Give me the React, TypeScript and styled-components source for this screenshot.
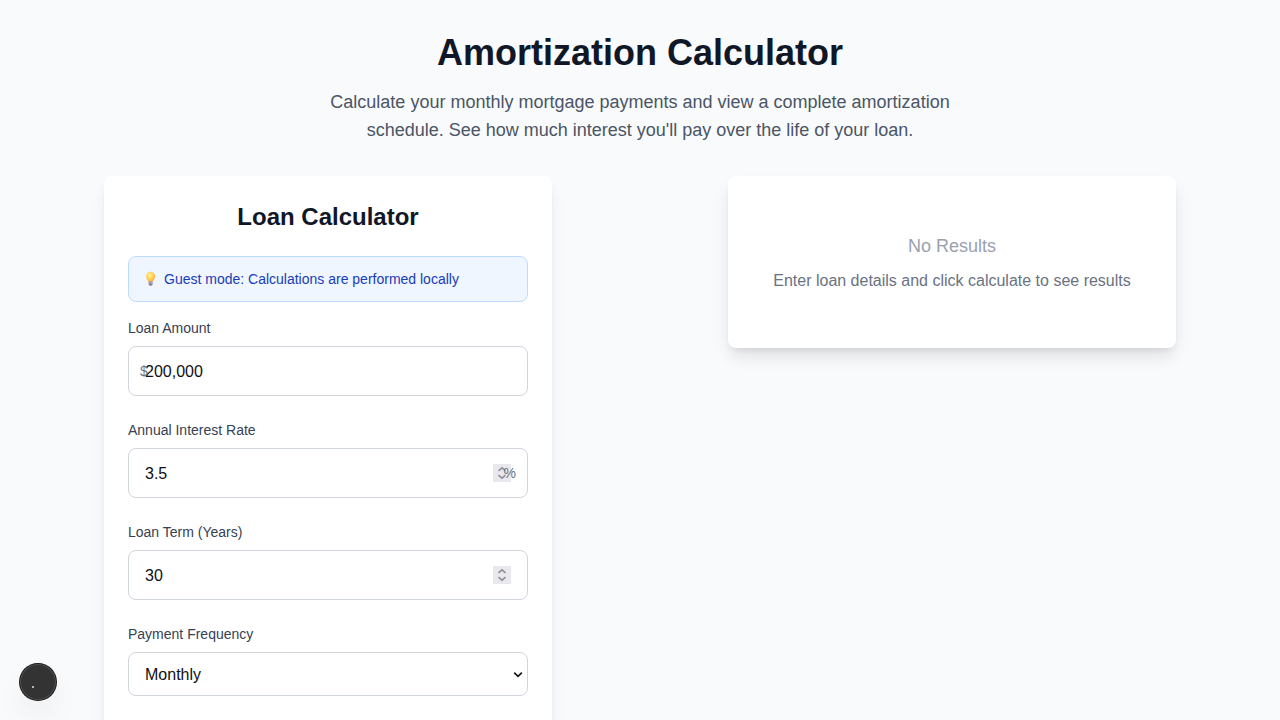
import React from "react";
import styled, { createGlobalStyle } from "styled-components";

const Global = createGlobalStyle`
  *, *::before, *::after { box-sizing: border-box; }
  html, body { margin: 0; padding: 0; }
  body {
    height: 720px;
    overflow: hidden;
    background: #f9fafb;
    color: #101828;
    font-family: "Liberation Sans", Arial, sans-serif;
    font-size: 16px;
    line-height: 24px;
  }
  h1, h2, p { margin: 0; }
`;

const Page = styled.main`
  height: 720px;
  overflow: hidden;
  background: #f9fafc;
  padding: 32px 104px 0;
`;

const Header = styled.header`
  text-align: center;
  margin-bottom: 32px;
`;

const Title = styled.h1`
  padding-top: 1px;
  font-size: 36px;
  line-height: 40px;
  font-weight: 700;
  margin-bottom: 15px;
`;

const Lead = styled.p`
  width: 672px;
  margin: 0 auto;
  font-size: 18px;
  line-height: 28px;
  color: #4a5565;
`;

const Columns = styled.div`
  display: flex;
  justify-content: space-between;
  align-items: flex-start;
`;

const Card = styled.section`
  width: 448px;
  padding: 24px;
  background: #fff;
  border-radius: 8px;
  box-shadow: 0 10px 15px -3px rgba(0, 0, 0, 0.1), 0 4px 6px -4px rgba(0, 0, 0, 0.1);
`;

const CardTitle = styled.h2`
  padding-top: 1px;
  font-size: 24px;
  line-height: 32px;
  font-weight: 700;
  text-align: center;
  margin-bottom: 23px;
`;

const Notice = styled.div`
  display: flex;
  align-items: center;
  height: 46px;
  padding: 0 16px 0 15px;
  margin-bottom: 16px;
  border: 1px solid #bedbff;
  border-radius: 8px;
  background: #eff6ff;
  color: #193cb8;
  font-size: 14px;
  line-height: 20px;
`;

const Field = styled.div`
  margin-bottom: 24px;
`;

const Label = styled.label`
  display: block;
  margin-bottom: 8px;
  font-size: 14px;
  line-height: 20px;
  color: #364153;
`;

const Control = styled.div`
  position: relative;
`;

const Input = styled.input`
  display: block;
  width: 100%;
  height: 50px;
  padding: 13px 16px 11px;
  border: 1px solid #d1d5dc;
  border-radius: 8px;
  background: #fff;
  color: #101014;
  font: 16px/24px "Liberation Sans", Arial, sans-serif;
  appearance: textfield;

  &::-webkit-inner-spin-button { appearance: none; }
`;

const Select = styled.select`
  display: block;
  width: 100%;
  height: 44px;
  padding: 2px 16px 0;
  border: 1px solid #d1d5dc;
  border-radius: 8px;
  background: #fff;
  color: #101014;
  font: 16px/24px "Liberation Sans", Arial, sans-serif;
  appearance: none;
`;

const Affix = styled.span<{ $side: "left" | "right" }>`
  position: absolute;
  top: 13px;
  ${(p) => p.$side}: 12px;
  font-size: 14px;
  color: #6a7282;
  pointer-events: none;
`;

const SpinnerBox = styled.span`
  position: absolute;
  top: 16px;
  right: 17px;
  width: 18px;
  height: 18px;
  background: #e9e9ed;
  pointer-events: none;

  svg { display: block; }
`;

const Arrow = styled.svg`
  position: absolute;
  top: 20px;
  right: 5px;
  pointer-events: none;
`;

const Empty = styled(Card)`
  height: 172px;
  padding-top: 56px;
  text-align: center;
  box-shadow: 0 10px 18px -3px rgba(0, 0, 0, 0.12), 0 4px 7px -4px rgba(0, 0, 0, 0.12);
`;

const EmptyTitle = styled.p`
  font-size: 18px;
  line-height: 28px;
  color: #99a1af;
  margin-bottom: 9px;
`;

const EmptyText = styled.p`
  color: #6a7282;
`;

const Badge = styled.div`
  position: fixed;
  left: 20px;
  bottom: 20px;
  width: 36px;
  height: 36px;
  border-radius: 50%;
  background: #333;
  box-shadow: 0 0 0 1px #171717, inset 0 0 0 1px rgba(255, 255, 255, 0.14), 0 16px 32px -8px rgba(0, 0, 0, 0.16);
`;

const Dot = styled.span`
  position: absolute;
  left: 12px;
  top: 22px;
  width: 2px;
  height: 2px;
  background: #b5b5b5;
`;

const BulbIcon = () => (
  <svg width="20" height="18" viewBox="0 0 20 18">
    <defs>
      <radialGradient id="bulb" cx="0.4" cy="0.35" r="0.7">
        <stop offset="0" stopColor="#fff0a0" />
        <stop offset="0.5" stopColor="#ffd45c" />
        <stop offset="1" stopColor="#f9ad3c" />
      </radialGradient>
    </defs>
    <path d="M2 6.4a4.6 4.6 0 1 1 9.2 0c0 2.3-1.9 3.2-2.2 5.2H4.2c-.3-2-2.2-2.9-2.2-5.2z" fill="url(#bulb)" />
    <path d="M4.5 11.3h4.2v2.9l-1 1.4H5.5l-1-1.4z" fill="#a898ab" />
    <path d="M5.4 14.3h2.4l-.5 1.3H5.9z" fill="#746a80" />
  </svg>
);

const Spinner = () => (
  <SpinnerBox>
    <svg width="18" height="18" viewBox="0 0 18 18" fill="none" stroke="#8f8f9d" strokeWidth="1.6">
      <path d="M5.5 6.8 9 3.8l3.5 3M5.5 11.2 9 14.2l3.5-3" />
    </svg>
  </SpinnerBox>
);

export default function App() {
  return (
    <>
      <Global />
      <Page>
        <Header>
          <Title>Amortization Calculator</Title>
          <Lead>
            Calculate your monthly mortgage payments and view a complete amortization schedule. See how much interest
            you'll pay over the life of your loan.
          </Lead>
        </Header>
        <Columns>
          <Card>
            <CardTitle>Loan Calculator</CardTitle>
            <Notice>
              <BulbIcon />
              <span>Guest mode: Calculations are performed locally</span>
            </Notice>
            <Field>
              <Label htmlFor="amount">Loan Amount</Label>
              <Control>
                <Input id="amount" type="text" defaultValue="200,000" />
                <Affix $side="left">$</Affix>
              </Control>
            </Field>
            <Field>
              <Label htmlFor="rate">Annual Interest Rate</Label>
              <Control>
                <Input id="rate" type="number" step="0.1" defaultValue="3.5" />
                <Spinner />
                <Affix $side="right">%</Affix>
              </Control>
            </Field>
            <Field>
              <Label htmlFor="term">Loan Term (Years)</Label>
              <Control>
                <Input id="term" type="number" defaultValue="30" />
                <Spinner />
              </Control>
            </Field>
            <Field>
              <Label htmlFor="frequency">Payment Frequency</Label>
              <Control>
                <Select id="frequency">
                  <option>Monthly</option>
                </Select>
                <Arrow width="10" height="6" viewBox="0 0 10 6" fill="none" stroke="#15141a" strokeWidth="1.7">
                  <path d="M1.2 .7 5 4.3 8.8 .7" />
                </Arrow>
              </Control>
            </Field>
          </Card>
          <Empty>
            <EmptyTitle>No Results</EmptyTitle>
            <EmptyText>Enter loan details and click calculate to see results</EmptyText>
          </Empty>
        </Columns>
      </Page>
      <Badge>
        <Dot />
      </Badge>
    </>
  );
}
